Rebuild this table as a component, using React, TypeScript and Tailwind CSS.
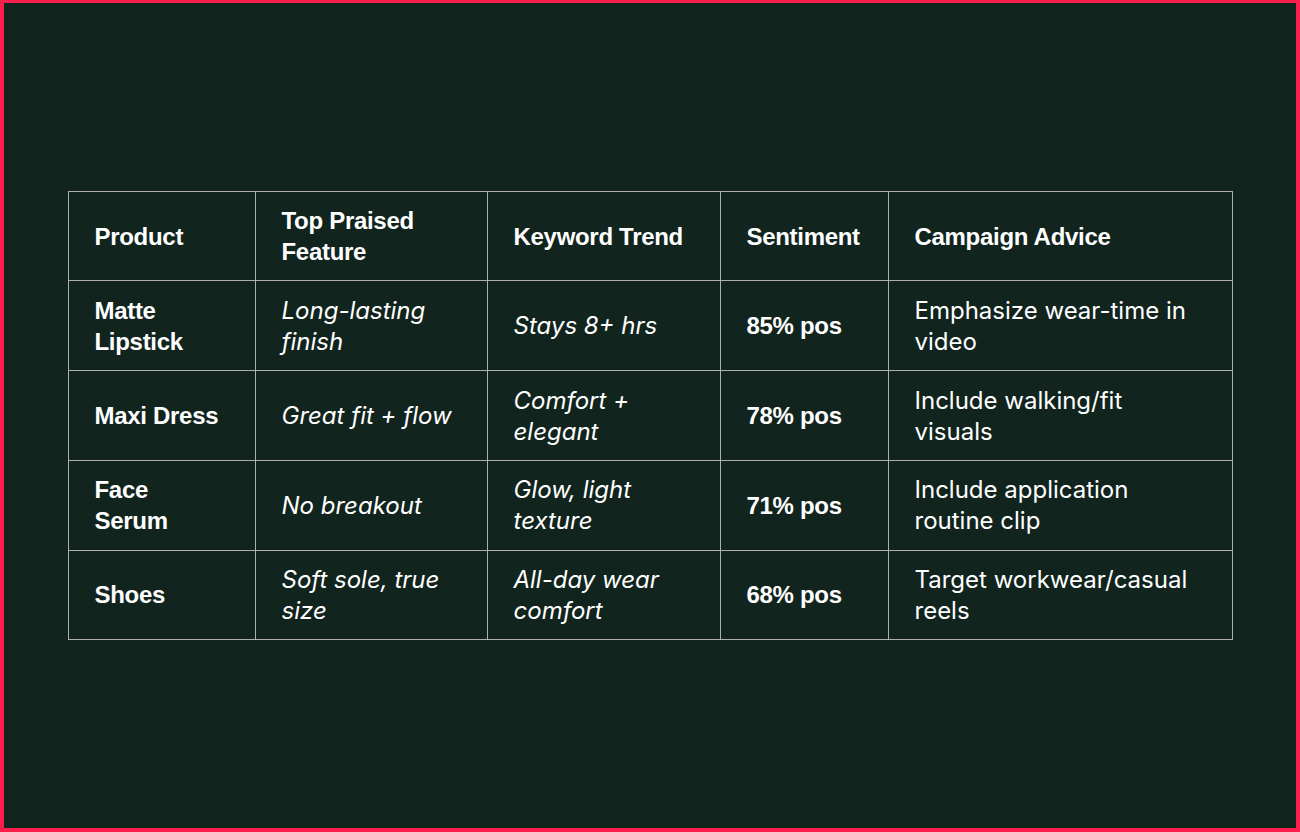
import React from "react";

type Row = {
  product: string[];
  feature: string[];
  trend: string[];
  sentiment: string;
  advice: string[];
};

const rows: Row[] = [
  { product: ["Matte", "Lipstick"], feature: ["Long-lasting", "finish"], trend: ["Stays 8+ hrs"], sentiment: "85% pos", advice: ["Emphasize wear-time in", "video"] },
  { product: ["Maxi Dress"], feature: ["Great fit + flow"], trend: ["Comfort +", "elegant"], sentiment: "78% pos", advice: ["Include walking/fit", "visuals"] },
  { product: ["Face", "Serum"], feature: ["No breakout"], trend: ["Glow, light", "texture"], sentiment: "71% pos", advice: ["Include application", "routine clip"] },
  { product: ["Shoes"], feature: ["Soft sole, true", "size"], trend: ["All-day wear", "comfort"], sentiment: "68% pos", advice: ["Target workwear/casual", "reels"] },
];

const cell = "border border-[#adb0ad] pl-[26px] pr-3 py-0 align-middle text-left whitespace-nowrap";
const bold = "font-bold tracking-[-0.3px] font-['Liberation_Sans',Arial,sans-serif]";

const Lines = ({ lines }: { lines: string[] }) => (
  <>
    {lines.map((l, i) => (
      <div key={i}>{l}</div>
    ))}
  </>
);

export default function App() {
  return (
    <div className="h-[832px] w-[1300px] bg-[#11241e] border-t-[3px] border-l-4 border-r-4 border-b-4 border-[#fb1d4b] flex items-center justify-center text-white font-['Inter',sans-serif]">
      <table className="table-fixed border-collapse w-[1164px] text-[24px] leading-[31px]">
        <colgroup>
          <col className="w-[187px]" />
          <col className="w-[232px]" />
          <col className="w-[233px]" />
          <col className="w-[168px]" />
          <col className="w-[344px]" />
        </colgroup>
        <thead>
          <tr className={"h-[89.7px] " + bold}>
            <th className={cell}>Product</th>
            <th className={cell}>
              <Lines lines={["Top Praised", "Feature"]} />
            </th>
            <th className={cell}>Keyword Trend</th>
            <th className={cell}>Sentiment</th>
            <th className={cell}>Campaign Advice</th>
          </tr>
        </thead>
        <tbody>
          {rows.map((r) => (
            <tr key={r.sentiment} className="h-[89.7px]">
              <td className={cell + " " + bold}>
                <Lines lines={r.product} />
              </td>
              <td className={cell + " italic"}>
                <Lines lines={r.feature} />
              </td>
              <td className={cell + " italic"}>
                <Lines lines={r.trend} />
              </td>
              <td className={cell + " " + bold}>{r.sentiment}</td>
              <td className={cell}>
                <Lines lines={r.advice} />
              </td>
            </tr>
          ))}
        </tbody>
      </table>
    </div>
  );
}
